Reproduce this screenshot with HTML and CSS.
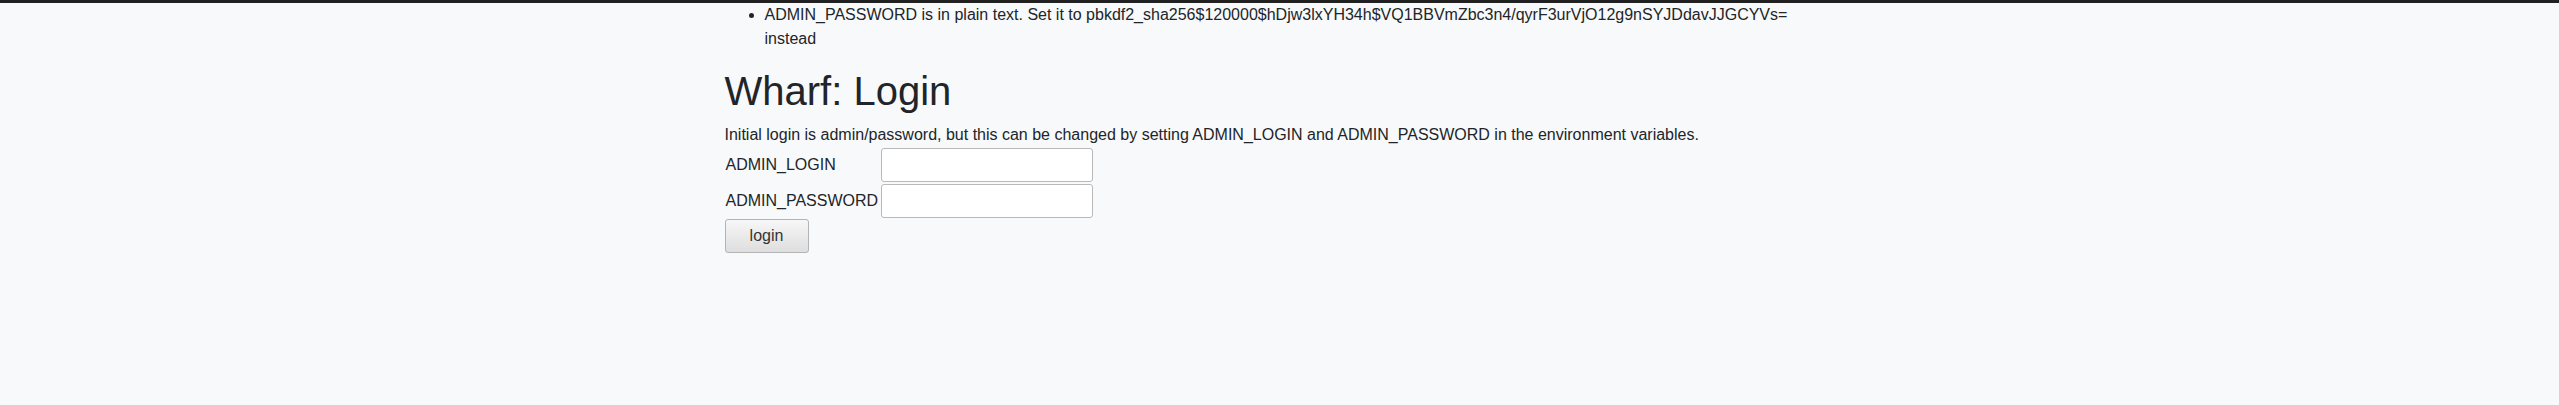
FILE: index.html
```html
<!DOCTYPE html>
<html lang="en">
<head>
<meta charset="utf-8">
<title>Wharf: Login</title>
<link rel="stylesheet" href="styles.css">
</head>
<body>
<div class="topbar"></div>
<main class="container">
  <ul class="messages">
    <li>ADMIN_PASSWORD is in plain text. Set it to pbkdf2_sha256$120000$hDjw3lxYH34h$VQ1BBVmZbc3n4/qyrF3urVjO12g9nSYJDdavJJGCYVs= instead</li>
  </ul>
  <h1 class="title">Wharf: Login</h1>
  <p class="intro">Initial login is admin/password, but this can be changed by setting ADMIN_LOGIN and ADMIN_PASSWORD in the environment variables.</p>
  <form class="login-form">
    <table class="fields">
      <tr>
        <td class="label-cell"><label for="id_login">ADMIN_LOGIN</label></td>
        <td><input class="text-input" type="text" id="id_login" name="login"></td>
      </tr>
      <tr>
        <td class="label-cell"><label for="id_password">ADMIN_PASSWORD</label></td>
        <td><input class="text-input" type="password" id="id_password" name="password"></td>
      </tr>
    </table>
    <button class="btn" type="submit">login</button>
  </form>
</main>
</body>
</html>
```

FILE: styles.css
```css
html, body {
  margin: 0;
  padding: 0;
}

body {
  background: #f8f9fa;
  color: #212529;
  font-family: "Liberation Sans", Arial, sans-serif;
  font-size: 16px;
  line-height: 1.5;
}

.topbar {
  height: 3px;
  background: #212121;
}

.container {
  max-width: 1110px;
  margin: 0 auto;
  padding: 0 15px;
}

.messages {
  margin: 0 0 16px;
  padding-left: 40px;
}

.title {
  font-size: 40px;
  font-weight: 500;
  line-height: 1.2;
  margin: 0 0 8px;
}

.intro {
  margin: 0;
}

.login-form {
  margin: 0;
}

.fields {
  border-collapse: collapse;
}

.fields td {
  padding: 1px;
  vertical-align: middle;
}

.fields .label-cell {
  padding-right: 2px;
}

.text-input {
  display: block;
  box-sizing: border-box;
  width: 212px;
  height: 34px;
  margin: 0;
  padding: 0 5px;
  border: 1px solid #b9b9b9;
  border-radius: 3px;
  background: #fff;
  font: inherit;
  color: #212529;
}

.btn {
  display: block;
  box-sizing: border-box;
  width: 84px;
  height: 34px;
  margin: 0;
  padding: 0;
  border: 1px solid #b4b4b4;
  border-radius: 3px;
  background: linear-gradient(#f7f7f7, #dedede);
  color: #333;
  font-family: "Liberation Sans", Arial, sans-serif;
  font-size: 16px;
  line-height: 1;
  box-shadow: 0 1px 0 rgba(0, 0, 0, 0.04);
}
```
